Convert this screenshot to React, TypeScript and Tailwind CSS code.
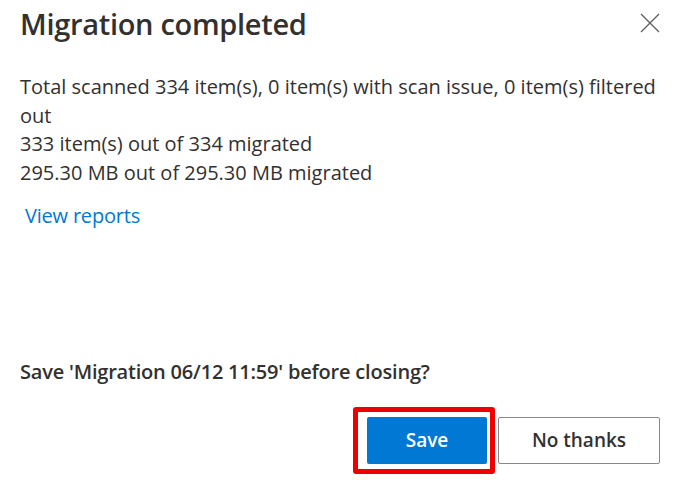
import React from 'react';

export default function App() {
  return (
    <div
      className="w-[676px] h-[486px] bg-white text-[#323130] flex flex-col"
      style={{fontFamily: '"Open Sans", "Noto Sans", sans-serif'}}
    >
      {/* Header */}
      <div className="flex items-start justify-between pl-[20px] pr-[12px] pt-[4px]">
        <h1 className="text-[29px] leading-[40px] font-semibold tracking-[-0.3px]">
          Migration completed
        </h1>
        <button className="w-[28px] h-[28px] mt-[5px] flex items-center justify-center text-[#605e5c]">
          <svg width="20" height="20" viewBox="0 0 20 20" fill="none" stroke="currentColor" strokeWidth="1.3">
            <path d="M1 1 L19 19 M19 1 L1 19" />
          </svg>
        </button>
      </div>

      {/* Body */}
      <div className="pl-[20px] pr-[16px] pt-[29px] text-[20px] leading-[28.7px]">
        <p>Total scanned 334 item(s), 0 item(s) with scan issue, 0 item(s) filtered out</p>
        <p>333 item(s) out of 334 migrated</p>
        <p>295.30 MB out of 295.30 MB migrated</p>
        <button className="mt-[14px] ml-[5px] text-[#0078d4] text-[20px] leading-[28px] tracking-[-0.2px]">View reports</button>
      </div>

      {/* Footer */}
      <div className="mt-auto pl-[20px] pr-[16px] pb-[12px]">
        <p className="text-[20px] font-semibold leading-[24px] tracking-[-0.2px]">
          Save 'Migration 06/12 11:59' before closing?
        </p>
        <div className="flex justify-end items-center gap-[3px] mt-[23px]">
          <div className="border-[5px] border-[#ee0000] rounded-[3px] pl-[9px] pr-[3px] py-[5px]">
            <button className="w-[120px] h-[47px] bg-[#0078d4] text-white rounded-[2px] text-[19px] font-semibold">
              Save
            </button>
          </div>
          <button className="w-[162px] h-[47px] border border-[#8a8886] rounded-[2px] bg-white text-[19px] font-semibold text-[#323130]">
            No thanks
          </button>
        </div>
      </div>
    </div>
  );
}
